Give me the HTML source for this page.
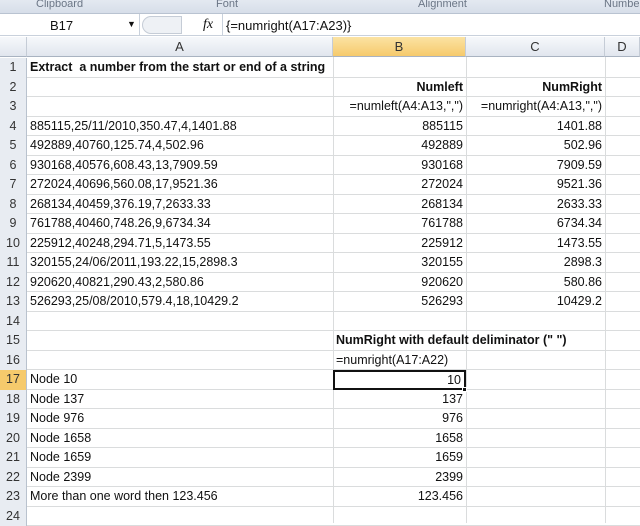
<!DOCTYPE html>
<html><head><style>
*{margin:0;padding:0;box-sizing:border-box}
body{width:640px;height:523px;overflow:hidden;background:#fff;font-family:"Liberation Sans",sans-serif;font-size:12.5px;color:#111;position:relative}
.rib{position:absolute;left:0;top:0;width:640px;height:14px;background:linear-gradient(#e4e9f1,#d7dee9);color:#6b7686;font-size:11px;border-bottom:1px solid #b9c3d1}
.rib span{position:absolute;top:-2px}
.fb{position:absolute;left:0;top:14px;width:640px;height:22px;background:#fff;border-bottom:1px solid #c9d1dc}
.nb{position:absolute;left:0;top:0;width:140px;height:22px;padding:4px 0 0 50px;font-size:13px;border-right:1px solid #c9d1dc}
.fx{position:absolute;left:222px;top:0;width:420px;height:22px;padding:4px 0 0 3px;font-size:13px;border-left:1px solid #c9d1dc}
.hdr{position:absolute;top:37px;height:20px;background:linear-gradient(#f6f8fb,#e1e6ee);border-right:1px solid #c5ccd6;border-bottom:1px solid #a9b3c1;text-align:center;font-size:13px;line-height:20px;color:#333}
.r{position:absolute;left:0;width:640px;height:19.5px;border-bottom:1px solid #dadcdd}
.r div{position:absolute;top:0;height:19px;line-height:19px;white-space:nowrap}
.n{left:0;width:27px;background:#e8ecf2;color:#333;text-align:center;border-right:1px solid #b9c2ce;height:19.5px!important}
.a{left:30px}
.b{left:333px;width:133px;text-align:right;padding-right:3px}
.c{left:466px;width:139px;text-align:right;padding-right:3px}
.bl{left:336px}
.v{position:absolute;top:57px;height:466px;width:1px;background:#dadcdd}
b{font-weight:bold}
</style></head><body>
<div class="rib"><span style="left:36px">Clipboard</span><span style="left:216px">Font</span><span style="left:418px">Alignment</span><span style="left:604px">Numbe</span></div>
<div class="fb"><div class="nb">B17</div><span style="position:absolute;left:127px;top:5px;font-size:9px">▼</span><span style="position:absolute;left:142px;top:2px;width:40px;height:18px;border:1px solid #c5ccd6;border-radius:9px 0 0 9px;background:#eef1f5"></span><span style="position:absolute;left:203px;top:3px;font-style:italic;font-family:'Liberation Serif',serif;font-size:14px">fx</span><div class="fx">{=numright(A17:A23)}</div></div>
<div class="hdr" style="left:0;width:27px"></div>
<div class="hdr" style="left:27px;width:306px">A</div>
<div class="hdr" style="left:333px;width:133px;background:linear-gradient(#fbe3a3,#f6ca6c);color:#333">B</div>
<div class="hdr" style="left:466px;width:139px">C</div>
<div class="hdr" style="left:605px;width:35px">D</div>
<div class="v" style="left:333px"></div><div class="v" style="left:466px"></div><div class="v" style="left:605px"></div>

<div class="r" style="top:58px"><div class="n">1</div><div class="a"><b>Extract&nbsp; a number from the start or end of a string</b></div></div>
<div class="r" style="top:77.5px"><div class="n">2</div><div class="b"><b>Numleft</b></div><div class="c"><b>NumRight</b></div></div>
<div class="r" style="top:97px"><div class="n">3</div><div class="b">=numleft(A4:A13,",")</div><div class="c">=numright(A4:A13,",")</div></div>
<div class="r" style="top:116.5px"><div class="n">4</div><div class="a">885115,25/11/2010,350.47,4,1401.88</div><div class="b">885115</div><div class="c">1401.88</div></div>
<div class="r" style="top:136px"><div class="n">5</div><div class="a">492889,40760,125.74,4,502.96</div><div class="b">492889</div><div class="c">502.96</div></div>
<div class="r" style="top:155.5px"><div class="n">6</div><div class="a">930168,40576,608.43,13,7909.59</div><div class="b">930168</div><div class="c">7909.59</div></div>
<div class="r" style="top:175px"><div class="n">7</div><div class="a">272024,40696,560.08,17,9521.36</div><div class="b">272024</div><div class="c">9521.36</div></div>
<div class="r" style="top:194.5px"><div class="n">8</div><div class="a">268134,40459,376.19,7,2633.33</div><div class="b">268134</div><div class="c">2633.33</div></div>
<div class="r" style="top:214px"><div class="n">9</div><div class="a">761788,40460,748.26,9,6734.34</div><div class="b">761788</div><div class="c">6734.34</div></div>
<div class="r" style="top:233.5px"><div class="n">10</div><div class="a">225912,40248,294.71,5,1473.55</div><div class="b">225912</div><div class="c">1473.55</div></div>
<div class="r" style="top:253px"><div class="n">11</div><div class="a">320155,24/06/2011,193.22,15,2898.3</div><div class="b">320155</div><div class="c">2898.3</div></div>
<div class="r" style="top:272.5px"><div class="n">12</div><div class="a">920620,40821,290.43,2,580.86</div><div class="b">920620</div><div class="c">580.86</div></div>
<div class="r" style="top:292px"><div class="n">13</div><div class="a">526293,25/08/2010,579.4,18,10429.2</div><div class="b">526293</div><div class="c">10429.2</div></div>
<div class="r" style="top:311.5px"><div class="n">14</div></div>
<div class="r" style="top:331px"><div class="n">15</div><div class="bl"><b>NumRight with default deliminator (" ")</b></div></div>
<div class="r" style="top:350.5px"><div class="n">16</div><div class="bl">=numright(A17:A22)</div></div>
<div class="r" style="top:370px"><div class="n" style="background:#f6ca6c">17</div><div class="a">Node 10</div><div class="b" style="border:2px solid #111;height:20px;line-height:17px">10</div></div>
<div class="r" style="top:389.5px"><div class="n">18</div><div class="a">Node 137</div><div class="b">137</div></div>
<div class="r" style="top:409px"><div class="n">19</div><div class="a">Node 976</div><div class="b">976</div></div>
<div class="r" style="top:428.5px"><div class="n">20</div><div class="a">Node 1658</div><div class="b">1658</div></div>
<div class="r" style="top:448px"><div class="n">21</div><div class="a">Node 1659</div><div class="b">1659</div></div>
<div class="r" style="top:467.5px"><div class="n">22</div><div class="a">Node 2399</div><div class="b">2399</div></div>
<div class="r" style="top:487px"><div class="n">23</div><div class="a">More than one word then 123.456</div><div class="b">123.456</div></div>
<div class="r" style="top:506.5px"><div class="n">24</div></div>
<div style="position:absolute;left:462px;top:387px;width:5px;height:5px;background:#111;border:1px solid #fff"></div>
</body></html>
